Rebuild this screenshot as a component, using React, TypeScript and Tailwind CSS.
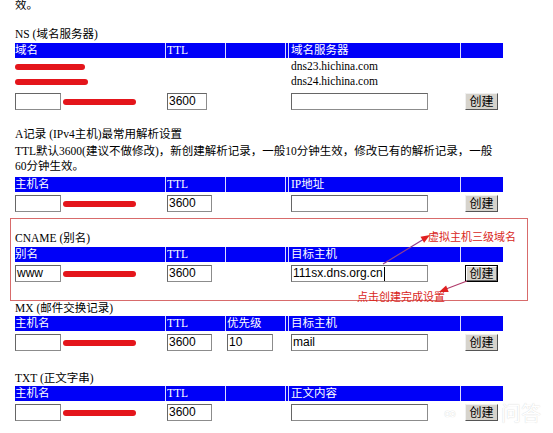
import React from "react";

function Header({ c1, c3, c4 }: { c1: string; c3?: string; c4: string }) {
  return (
    <div className="flex h-[15px] w-[488px] bg-[#0000f8] leading-[15px] text-white">
      <div className="w-[150px] whitespace-nowrap">{c1}</div>
      <div className="w-px bg-[#dcdcff]" />
      <div className="w-[59px] pl-[1px]">TTL</div>
      <div className="w-px bg-[#dcdcff]" />
      <div className="w-[59px] whitespace-nowrap pl-[1px]">{c3}</div>
      <div className="w-px bg-[#dcdcff]" />
      <div className="w-[2px]" />
      <div className="w-px bg-[#dcdcff]" />
      <div className="w-[171px] whitespace-nowrap pl-[2px]">{c4}</div>
      <div className="w-px bg-[#dcdcff]" />
      <div className="w-[42px]" />
    </div>
  );
}

function Field({
  w,
  value,
  cursor,
}: {
  w: string;
  value?: string;
  cursor?: boolean;
}) {
  return (
    <div
      className={`${w} flex h-[17px] items-center overflow-hidden whitespace-nowrap border border-[#8c8c8c] border-l-[#666] border-t-[#666] bg-white pl-[1px] font-['Liberation_Sans',sans-serif] text-[12px] leading-[15px] text-black`}
    >
      {value}
      {cursor && <span className="ml-[1px] block h-[14px] w-px bg-black" />}
    </div>
  );
}

function Btn({ focused }: { focused?: boolean }) {
  return focused ? (
    <div className="h-[17px] w-[33px] border border-black">
      <div className="flex h-full w-full items-center justify-center border border-white border-b-[#666] border-r-[#666] bg-[#d6d3cc] text-[12px] leading-[12px]">
        创建
      </div>
    </div>
  ) : (
    <div className="flex h-[17px] w-[33px] items-center justify-center border border-[#f0f0f0] border-b-[#555] border-r-[#555] bg-[#d6d3cc] text-[12px] leading-[12px]">
      创建
    </div>
  );
}

function Scribble({ w }: { w: string }) {
  return <span className={`${w} block h-[6px] rounded-full bg-[#e4151b]`} />;
}

function Row({
  ttlW = "w-[45px]",
  prio,
  target,
  host,
  cursor,
  focused,
  className = "",
}: {
  ttlW?: string;
  prio?: string;
  target?: string;
  host?: string;
  cursor?: boolean;
  focused?: boolean;
  className?: string;
}) {
  return (
    <div className={`flex h-[17px] w-[488px] items-center ${className}`}>
      <div className="flex w-[151px] items-center">
        <Field w="w-[46px]" value={host} />
        <span className="ml-[2px]">
          <Scribble w="w-[73px]" />
        </span>
      </div>
      <div className="w-[60px] pl-[1px]">
        <Field w={ttlW} value="3600" />
      </div>
      <div className="w-[63px] pl-[1px]">
        {prio && <Field w="w-[46px]" value={prio} />}
      </div>
      <div className="w-[172px] pl-[2px]">
        <Field w="w-[137px]" value={target} cursor={cursor} />
      </div>
      <div className="w-[42px] pl-[4px]">
        <Btn focused={focused} />
      </div>
    </div>
  );
}

export default function App() {
  return (
    <div className="relative h-[433px] w-[553px] overflow-hidden bg-white pl-[15px] font-['Liberation_Serif','Noto_Sans_CJK_SC',serif] text-[11.5px] text-black">
      <div className="-mt-[1px] h-[12px] leading-[12px]">效。</div>

      {/* NS */}
      <div className="mt-[16px] h-[15px] leading-[15px]">NS (域名服务器)</div>
      <div className="mt-[1px]">
        <Header c1="域名" c4="域名服务器" />
      </div>
      <div className="mt-[1px] flex h-[15px] items-center">
        <div className="w-[276px]">
          <Scribble w="w-[70px]" />
        </div>
        <span>dns23.hichina.com</span>
      </div>
      <div className="flex h-[15px] items-center">
        <div className="w-[276px]">
          <Scribble w="w-[73px]" />
        </div>
        <span>dns24.hichina.com</span>
      </div>
      <Row className="mt-[4px]" ttlW="w-[40px]" />

      {/* A */}
      <div className="mt-[17px] h-[15px] leading-[15px]">A记录 (IPv4主机)最常用解析设置</div>
      <div className="mt-[2px] w-[490px] leading-[15px]">
        TTL默认3600(建议不做修改)，新创建解析记录，一般10分钟生效，修改已有的解析记录，一般
        <br />
        60分钟生效。
      </div>
      <div className="mt-[3px]">
        <Header c1="主机名" c4="IP地址" />
      </div>
      <Row className="mt-[3px]" />

      {/* CNAME boxed */}
      <div className="-ml-[5px] mt-[6px] w-[518px] border border-[#d86b6b] pb-[18px] pl-[4px] pt-[12px]">
        <div className="h-[15px] leading-[15px]">CNAME (别名)</div>
        <div className="mt-[1px]">
          <Header c1="别名" c4="目标主机" />
        </div>
        <Row className="mt-[3px]" host="www" target="111sx.dns.org.cn" cursor focused />
      </div>

      {/* MX */}
      <div className="h-[15px] leading-[15px]">MX (邮件交换记录)</div>
      <Header c1="主机名" c3="优先级" c4="目标主机" />
      <Row className="mt-[3px]" prio="10" target="mail" />

      {/* TXT */}
      <div className="mt-[20px] h-[15px] leading-[15px]">TXT (正文字串)</div>
      <Header c1="主机名" c4="正文内容" />
      <Row className="mt-[3px]" />

      {/* annotations */}
      <svg className="pointer-events-none absolute left-0 top-0" width="553" height="433">
        <line x1="383" y1="264" x2="424" y2="239" stroke="#93408c" strokeWidth="1.2" />
        <polygon points="430,235 424.1,242.7 420.5,236.7" fill="#e02020" />
        <line x1="467" y1="281" x2="446" y2="289" stroke="#b03a6a" strokeWidth="1.2" />
        <polygon points="439,292 448.7,292 446.1,285.4" fill="#e02020" />
      </svg>
      <div className="absolute left-[428px] top-[230px] whitespace-nowrap font-['Noto_Sans_CJK_SC',sans-serif] text-[11px] leading-[13px] text-[#d9261c]">
        虚拟主机三级域名
      </div>
      <div className="absolute left-[357px] top-[290px] whitespace-nowrap font-['Noto_Sans_CJK_SC',sans-serif] text-[11px] leading-[13px] text-[#d9261c]">
        点击创建完成设置
      </div>

      {/* watermark */}
      <div className="pointer-events-none absolute left-[443px] top-[403px] font-['DejaVu_Sans',sans-serif] text-[17px] leading-[20px] text-white [text-shadow:0_0_1px_#c8c8c8]">
        ∞
      </div>
      <div className="pointer-events-none absolute left-[501px] top-[403px] whitespace-nowrap font-['Noto_Sans_CJK_SC',sans-serif] text-[20px] leading-[20px] text-white [text-shadow:0_0_1px_#c8c8c8]">
        问答
      </div>
    </div>
  );
}
